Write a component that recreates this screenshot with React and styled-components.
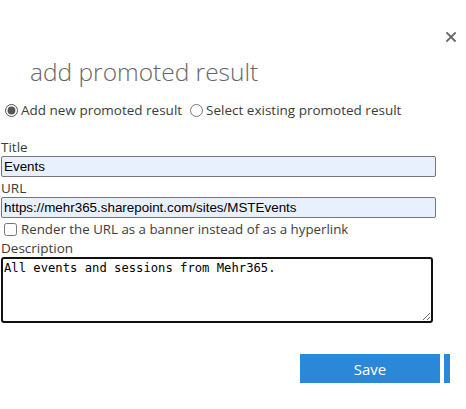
import styled, { createGlobalStyle } from 'styled-components';

const GlobalStyle = createGlobalStyle`
    body {
        margin: 0;
        background: #fff;
        font-family: "Open Sans", "Noto Sans", sans-serif;
    }
`

const App = () => {
    return (
        <Dialog>
            <GlobalStyle/>
            <TopBar>
                <Close aria-label="close">
                    <svg width="10" height="10" viewBox="0 0 10 10">
                        <path d="M1 1L9 9M9 1L1 9" stroke="#666" strokeWidth="1.8" strokeLinecap="square"/>
                    </svg>
                </Close>
            </TopBar>
            <Heading>add promoted result</Heading>
            <RadioRow>
                <Choice>
                    <input type="radio" name="mode" defaultChecked/>
                    Add new promoted result
                </Choice>
                <Choice>
                    <input type="radio" name="mode"/>
                    Select existing promoted result
                </Choice>
            </RadioRow>
            <Form>
                <Label>Title</Label>
                <TextInput defaultValue="Events"/>
                <Label>URL</Label>
                <TextInput defaultValue="https://mehr365.sharepoint.com/sites/MSTEvents"/>
                <CheckRow>
                    <input type="checkbox"/>
                    Render the URL as a banner instead of as a hyperlink
                </CheckRow>
                <Label>Description</Label>
                <TextArea defaultValue="All events and sessions from Mehr365."/>
            </Form>
            <ButtonRow>
                <Button>Save</Button>
                <Button aria-label="Cancel"/>
            </ButtonRow>
        </Dialog>
    );
}

export default App;

const Dialog = styled.div`
    width: 466px;
    height: 409px;
    overflow: hidden;
`

const TopBar = styled.div`
    display: flex;
    justify-content: flex-end;
    padding: 32px 10px 0 0;
    height: 10px;
`

const Close = styled.div`
    width: 10px;
    height: 10px;
    display: flex;
`

const Heading = styled.h1`
    margin: 14px 0 0 30px;
    font-size: 24.5px;
    font-weight: 300;
    line-height: 32px;
    color: #666;
`

const RadioRow = styled.div`
    display: flex;
    gap: 8px;
    margin-top: 13px;
    font-size: 13.5px;
    color: #3c3c3c;
    line-height: 18px;
`

const Choice = styled.label`
    display: flex;
    align-items: center;
    input {
        margin: 0 3px 0 5px;
        width: 13px;
        height: 13px;
        accent-color: #555;
    }
    & + & input {
        margin-left: 0;
    }
`

const Form = styled.div`
    display: flex;
    flex-direction: column;
    padding-left: 1px;
    margin-top: 19px;
`

const Label = styled.div`
    font-size: 13.5px;
    color: #3c3c3c;
    line-height: 18px;
`

const TextInput = styled.input`
    width: 435px;
    height: 21px;
    box-sizing: border-box;
    border: 1px solid #767676;
    border-radius: 2px;
    background: #e8f0fe;
    padding: 0 2px;
    font-family: "Liberation Sans", Arial, sans-serif;
    font-size: 13.4px;
    color: #000;
    margin-bottom: 2px;
    outline: none;
`

const CheckRow = styled.label`
    display: flex;
    align-items: center;
    font-size: 13.3px;
    color: #3c3c3c;
    line-height: 18px;
    margin: 0 0 1px;
    input {
        margin: 0 4px 0 3px;
        width: 13px;
        height: 13px;
    }
`

const TextArea = styled.textarea`
    width: 432px;
    height: 66px;
    box-sizing: border-box;
    border: 2px solid #111;
    border-radius: 3px;
    padding: 1px 1px;
    font-family: "DejaVu Sans Mono", "Liberation Mono", monospace;
    font-size: 12.2px;
    line-height: 16px;
    color: #000;
    outline: none;
    resize: both;
`

const ButtonRow = styled.div`
    display: flex;
    gap: 4px;
    width: 450px;
    box-sizing: border-box;
    padding-left: 300px;
    margin-top: 31px;
    overflow: hidden;
`

const Button = styled.button`
    flex-shrink: 0;
    width: 140px;
    height: 29px;
    border: none;
    background: #2b88d8;
    color: #fff;
    font-family: "Open Sans", "Noto Sans", sans-serif;
    font-size: 15px;
    padding: 0;
`
